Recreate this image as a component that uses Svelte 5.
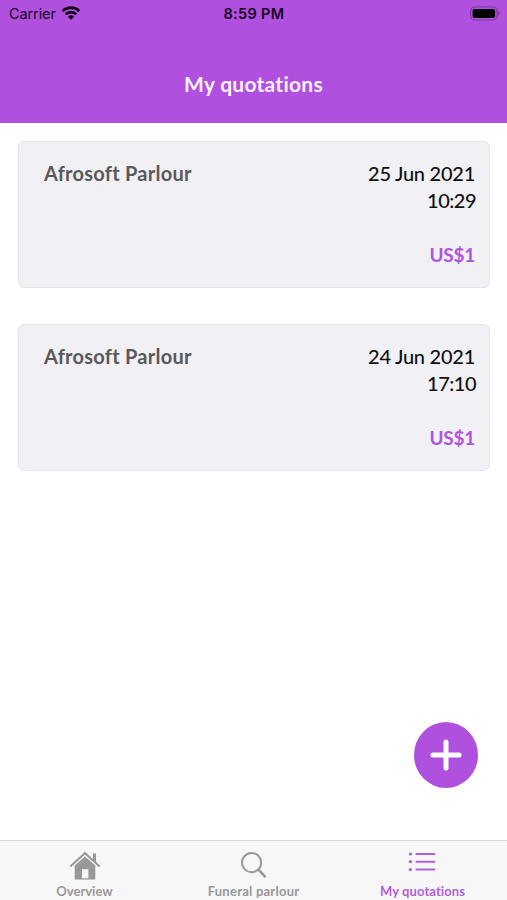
<script>
    // quotations shown in the list, newest first
    let quotations = [
        { parlour: "Afrosoft Parlour", date: "25 Jun 2021", time: "10:29", price: "US$1" },
        { parlour: "Afrosoft Parlour", date: "24 Jun 2021", time: "17:10", price: "US$1" },
    ];

    const tabs = [
        { id: "overview", label: "Overview" },
        { id: "search", label: "Funeral parlour" },
        { id: "quotations", label: "My quotations" },
    ];

    let activeTab = "quotations";
</script>

<div class="screen">
    <header>
        <div class="status-bar">
            <div class="carrier">
                <span>Carrier</span>
                <svg class="wifi" width="20" height="14" viewBox="0 0 18 13">
                    <path d="M1.2 4.7a11.2 11.2 0 0 1 15.6 0" />
                    <path d="M4.1 7.7a7 7 0 0 1 9.8 0" />
                    <path class="dot" d="M6.1 9.9a4.2 4.2 0 0 1 5.8 0L9 12.8z" />
                </svg>
            </div>
            <div class="clock">8:59 PM</div>
            <svg class="battery" width="30" height="15" viewBox="0 0 30 15">
                <rect class="shell" x="0.6" y="1" width="26.5" height="13" rx="4" />
                <rect x="2.6" y="3" width="22.5" height="9" rx="2" />
                <path class="cap" d="M28.3 5.3c1.6.6 1.6 4 0 4.6z" />
            </svg>
        </div>
        <h1>My quotations</h1>
    </header>

    <main>
        {#each quotations as { parlour, date, time, price }}
            <div class="card">
                <div class="parlour">{parlour}</div>
                <div class="details">
                    <div class="date">{date}</div>
                    <div class="time">{time}</div>
                    <div class="price">{price}</div>
                </div>
            </div>
        {/each}
    </main>

    <!-- floating button for a new quotation -->
    <button class="add" aria-label="Add quotation">
        <svg width="32" height="32" viewBox="0 0 32 32">
            <path d="M16 3v26M3 16h26" />
        </svg>
    </button>

    <nav>
        {#each tabs as { id, label }}
            <button class="tab" class:active={activeTab === id} on:click={() => (activeTab = id)}>
                {#if id === "overview"}
                    <svg width="32" height="30" viewBox="0 0 32 30">
                        <path class="fill" d="M16 5.4 26.3 14.6V28.5H5.7V14.6zM13 18.2V27.2h6.4v-9z" fill-rule="evenodd" />
                        <path class="fill" d="M24 2.5h3v9L24 8.5z" />
                        <path class="roof" d="M1.3 15.4 16 2.2l14.7 13.2" />
                    </svg>
                {:else if id === "search"}
                    <svg width="32" height="30" viewBox="0 0 32 30">
                        <circle class="line" cx="13.6" cy="11.6" r="9.6" />
                        <path class="handle" d="m20.3 18.4 7.2 7.8" />
                    </svg>
                {:else}
                    <svg width="32" height="30" viewBox="0 0 32 30">
                        <circle class="fill" cx="3.4" cy="3" r="1.6" />
                        <circle class="fill" cx="3.4" cy="10.7" r="1.6" />
                        <circle class="fill" cx="3.4" cy="18.6" r="1.6" />
                        <path class="bar" d="M8.6 3h19.6M8.6 10.8h19.6M8.6 18.6h19.6" />
                    </svg>
                {/if}
                <span class={id}>{label}</span>
            </button>
        {/each}
    </nav>
</div>

<style>
    :global(body) {
        margin: 0;
        background-color: white;
    }

    .screen {
        position: relative;
        display: flex;
        flex-direction: column;
        height: 900px;
        overflow: hidden;
        font-family: Lato, "Open Sans", sans-serif;
        font-variant-ligatures: none;
    }

    header {
        height: 123px;
        background-color: #af50de;
    }

    /* Carrier, time and battery */
    .status-bar {
        display: grid;
        grid-template-columns: 1fr auto 1fr;
        align-items: center;
        height: 27px;
        padding: 0 7px 0 9px;
        font-family: Inter, sans-serif;
        font-size: 14.5px;
        color: #170521;
    }

    .carrier {
        display: flex;
        align-items: center;
        gap: 5px;
    }

    .carrier span {
        letter-spacing: -0.1px;
    }

    .wifi {
        margin-top: -2px;
        fill: none;
        stroke: #100317;
        stroke-width: 2.4;
    }

    .wifi .dot {
        fill: #100317;
        stroke: none;
    }

    .clock {
        margin-right: 1px;
        font-weight: 600;
        letter-spacing: 0.35px;
    }

    .battery {
        justify-self: end;
    }

    .battery .shell {
        fill: none;
        stroke: #7b389c;
        stroke-width: 1.2;
    }

    .battery .cap {
        fill: #7b389c;
    }

    h1 {
        margin: 43px 0 0;
        text-align: center;
        font-size: 21px;
        line-height: 28px;
        font-weight: 700;
        letter-spacing: 0.25px;
        color: #fbf0ff;
    }

    main {
        flex: 1;
        display: flex;
        flex-direction: column;
        gap: 36px;
        padding: 18px 17px 0 18px;
    }

    .card {
        box-sizing: border-box;
        display: flex;
        justify-content: space-between;
        height: 147px;
        padding: 18px 14px 0 25px;
        border: 1.5px solid #e5e5e9;
        border-radius: 6px;
        background-color: #f1f0f5;
        font-size: 20px;
        line-height: 27px;
    }

    .parlour {
        font-weight: 700;
        letter-spacing: 0.25px;
        color: #59595b;
    }

    .details {
        text-align: right;
        font-weight: 500;
        letter-spacing: -0.25px;
        color: #111;
    }

    .time {
        margin-right: -1px;
        letter-spacing: -0.5px;
    }

    .price {
        margin-top: 27px;
        font-size: 19px;
        font-weight: 700;
        color: #ae55dc;
    }

    button {
        padding: 0;
        border: none;
        background: none;
        font-family: inherit;
        cursor: pointer;
    }

    .add {
        position: absolute;
        right: 29px;
        bottom: 112px;
        display: flex;
        align-items: center;
        justify-content: center;
        width: 64px;
        height: 66px;
        border-radius: 50%;
        background-color: #af50de;
    }

    .add path {
        stroke: white;
        stroke-width: 5;
        stroke-linecap: round;
    }

    nav {
        box-sizing: border-box;
        display: grid;
        grid-template-columns: repeat(3, 1fr);
        height: 60px;
        border-top: 1px solid #d9d9d9;
        background-color: #f7f7f7;
    }

    .tab {
        display: flex;
        flex-direction: column;
        align-items: center;
        padding-top: 10px;
        font-size: 13px;
        line-height: 16px;
        font-weight: 700;
        font-variant-ligatures: none;
        color: #989898;
    }

    .tab span {
        margin-top: 2px;
    }

    .tab .search {
        letter-spacing: 0.25px;
    }

    .tab .quotations {
        letter-spacing: 0.1px;
    }

    .tab.active {
        color: #b15edc;
    }

    .tab svg {
        fill: none;
        stroke: currentColor;
        stroke-width: 0;
    }

    .tab .fill {
        fill: currentColor;
    }

    .tab .roof,
    .tab .line,
    .tab .bar {
        stroke-width: 2;
    }

    .tab .handle {
        stroke-width: 2.6;
    }
</style>
